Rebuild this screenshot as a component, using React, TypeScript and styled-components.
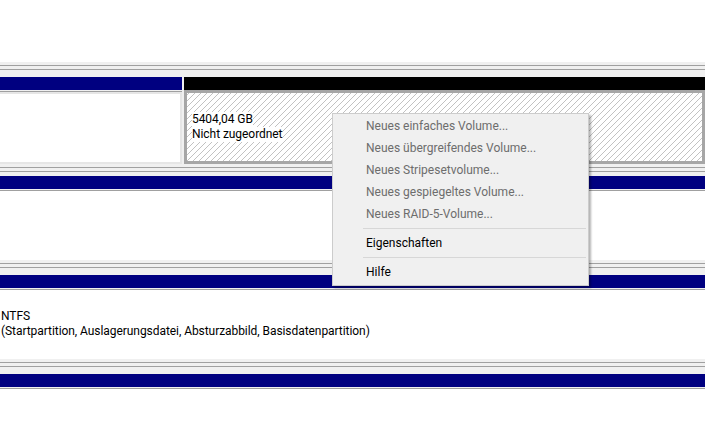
import React from 'react'
import styled, { createGlobalStyle } from 'styled-components'

const GlobalStyle = createGlobalStyle`
  html, body {
    margin: 0;
    padding: 0;
    background: #fff;
  }
  body {
    font-family: "Segoe UI", Roboto, "Noto Sans", sans-serif;
    font-size: 12px;
    color: #000;
  }
`

const Screen = styled.div`
  position: relative;
  width: 705px;
  height: 442px;
  overflow: hidden;
  background: #fff;
  display: flex;
  flex-direction: column;
`

const Filler = styled.div<{ $h: number }>`
  flex: none;
  height: ${(p) => p.$h}px;
  background: #fff;
`

// grey strip between two disks: bottom edge of one, top edge of the next
const DiskGap = styled.div<{ $tail?: number }>`
  flex: none;
  display: flex;
  flex-direction: column;
  gap: 3px;
  padding: 3px 0 ${(p) => p.$tail ?? 7}px;
  background: #f0f0f0;

  &::before,
  &::after {
    content: '';
    height: 1px;
    background: #a0a0a0;
  }
`

const DiskRow = styled.div<{ $h?: number }>`
  display: flex;
  gap: 2px;
  background: #f0f0f0;
  ${(p) => (p.$h ? `flex: none; height: ${p.$h}px;` : 'flex: 1;')}
`

const Partition = styled.div<{ $w?: number }>`
  display: flex;
  flex-direction: column;
  min-width: 0;
  ${(p) => (p.$w ? `flex: none; width: ${p.$w}px;` : 'flex: 1;')}
`

const Bar = styled.div<{ $color: string }>`
  flex: none;
  height: 13px;
  background: ${(p) => p.$color};
`

const Body = styled.div<{ $framed?: boolean }>`
  flex: 1;
  display: flex;
  flex-direction: column;
  justify-content: center;
  background: #fff;
  border-top: 1px solid #f0f0f0;
  box-shadow: inset 0 1px 0 #a0a0a0
    ${(p) => (p.$framed ? ', inset -2px -2px 0 #e6e6e6, inset 0 3px 0 #e6e6e6' : '')};
`

// selected region: thick grey frame, fine diagonal hatching
const HatchedBody = styled.div`
  flex: 1;
  display: flex;
  flex-direction: column;
  justify-content: center;
  border: 3px solid #a6a6a6;
  background: repeating-linear-gradient(
    -45deg,
    #fff 0,
    #fff 3.44px,
    #c2c2c2 3.44px,
    #c2c2c2 4.24px
  );
`

const Label = styled.div<{ $inset?: number }>`
  display: flex;
  flex-direction: column;
  align-items: flex-start;
  padding-left: ${(p) => p.$inset ?? 1}px;
  line-height: 15px;
  letter-spacing: -0.06px;
  white-space: nowrap;

  span {
    background: #fff;
  }
`

const Menu = styled.div`
  position: absolute;
  left: 332px;
  top: 113px;
  width: 257px;
  box-sizing: border-box;
  padding: 1px 1px 2px;
  background: #f0f0f0;
  border: 1px solid #cccccc;
  box-shadow: 2px 2px 2px rgba(0, 0, 0, 0.3);
`

const MenuItem = styled.div<{ $disabled?: boolean }>`
  height: 22px;
  line-height: 22px;
  padding-left: 32px;
  white-space: nowrap;
  color: ${(p) => (p.$disabled ? '#6d6d6d' : '#000')};
`

const MenuSeparator = styled.div`
  height: 1px;
  margin: 3px 1px 3px 29px;
  background: #d7d7d7;
`

const newVolumeItems = [
  'Neues einfaches Volume...',
  'Neues übergreifendes Volume...',
  'Neues Stripesetvolume...',
  'Neues gespiegeltes Volume...',
  'Neues RAID-5-Volume...',
]

export default function App() {
  return (
    <>
      <GlobalStyle />
      <Screen>
        <Filler $h={62} />
        <DiskGap />

        <DiskRow $h={87}>
          <Partition $w={182}>
            <Bar $color="#000080" />
            <Body $framed />
          </Partition>
          <Partition>
            <Bar $color="#000" />
            <HatchedBody>
              <Label $inset={5}>
                <span>5404,04 GB</span>
                <span>Nicht zugeordnet</span>
              </Label>
            </HatchedBody>
          </Partition>
        </DiskRow>
        <DiskGap $tail={4} />

        <DiskRow $h={84}>
          <Partition>
            <Bar $color="#000080" />
            <Body />
          </Partition>
        </DiskRow>
        <DiskGap />

        <DiskRow $h={84}>
          <Partition>
            <Bar $color="#000080" />
            <Body>
              <Label>
                <span>NTFS</span>
                <span>(Startpartition, Auslagerungsdatei, Absturzabbild, Basisdatenpartition)</span>
              </Label>
            </Body>
          </Partition>
        </DiskRow>
        <DiskGap />

        <DiskRow>
          <Partition>
            <Bar $color="#000080" />
            <Body />
          </Partition>
        </DiskRow>

        <Menu>
          {newVolumeItems.map((label) => (
            <MenuItem key={label} $disabled>
              {label}
            </MenuItem>
          ))}
          <MenuSeparator />
          <MenuItem>Eigenschaften</MenuItem>
          <MenuSeparator />
          <MenuItem>Hilfe</MenuItem>
        </Menu>
      </Screen>
    </>
  )
}
